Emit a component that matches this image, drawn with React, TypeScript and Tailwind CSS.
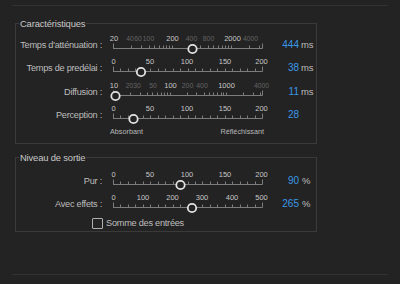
import React from "react";

type Lbl = [string, number, boolean];

const TRACK_START = 113;
const TRACK_END = 262;
const BOX_LEFT = 102;

function linTicks(): number[] {
  const out: number[] = [];
  for (let i = 0; i <= 20; i++) out.push(TRACK_START + ((TRACK_END - TRACK_START) * i) / 20);
  return out;
}

function logTicks(base: number, perDecade: number): number[] {
  const out: number[] = [];
  let dec = base;
  for (let d = 0; d < 4; d++) {
    for (let m = 1; m < 10; m++) {
      const v = dec * m;
      const x = TRACK_START + perDecade * Math.log10(v / base);
      if (x <= TRACK_END - 1) out.push(x);
    }
    dec *= 10;
  }
  out.push(TRACK_END);
  return out;
}

function Slider({ labels, ticks, thumb }: { labels: Lbl[]; ticks: number[]; thumb: number }) {
  const y = 13.5;
  return (
    <div className="relative h-full w-[165px] shrink-0">
      {labels.map(([t, x, b], i) => (
        <span
          key={i}
          className={`absolute top-0 -translate-x-1/2 whitespace-nowrap leading-[8px] ${
            b ? "text-[7.5px] text-[#c8c8c8]" : "text-[6.8px] text-[#646464]"
          }`}
          style={{ left: x - BOX_LEFT }}
        >
          {t}
        </span>
      ))}
      <svg className="absolute left-0 top-0" width="165" height="24" viewBox="0 0 165 24">
        <line x1={TRACK_START - BOX_LEFT} y1={y} x2={TRACK_END - BOX_LEFT + 0.5} y2={y} stroke="#7c7c7c" strokeWidth="1" />
        {ticks.map((x, i) => {
          const px = Math.round(x - BOX_LEFT) + 0.5;
          const end = i === 0 || i === ticks.length - 1;
          return (
            <line key={i} x1={px} y1={end ? y - 5 : y - 3} x2={px} y2={y} stroke="#7c7c7c" strokeWidth="1" />
          );
        })}
        <circle cx={thumb - BOX_LEFT} cy={y + 0.5} r="4.2" fill="#232323" stroke="#e2e2e2" strokeWidth="1.8" />
      </svg>
    </div>
  );
}

function Row({
  label,
  value,
  unit,
  labels,
  ticks,
  thumb,
  unitPad = "pl-[2px]",
}: {
  label: string;
  value: string;
  unit?: string;
  labels: Lbl[];
  ticks: number[];
  thumb: number;
  unitPad?: string;
}) {
  return (
    <div className="flex h-[23.33px] items-start">
      <div className="w-[86px] shrink-0 whitespace-nowrap pt-[4px] text-right text-[9.2px] leading-[12px] tracking-[-0.25px] text-[#bdbdbd]">
        {label}
      </div>
      <Slider labels={labels} ticks={ticks} thumb={thumb} />
      <div className="w-[32px] shrink-0 pt-[4px] text-right text-[10px] leading-[12px] text-[#3a97e6]">
        {value}
      </div>
      {unit && (
        <div className={`${unitPad} pt-[4px] text-[9.5px] leading-[12px] tracking-[-0.2px] text-[#bdbdbd]`}>{unit}</div>
      )}
    </div>
  );
}

const lin200: Lbl[] = [
  ["0", 113.5, true],
  ["50", 150, true],
  ["100", 187, true],
  ["150", 225, true],
  ["200", 261.5, true],
];

export default function App() {
  return (
    <div className="h-[284px] w-[400px] overflow-hidden bg-[#232323] font-['Liberation_Sans',sans-serif]">
      <div className="ml-[12px] mt-[5px] box-border h-[270px] w-[376px] border-b border-t border-[#323232] pt-[11px]">
        <fieldset className="ml-[3px] w-[302px] border border-[#3a3a3a] px-0 pb-[6.67px] pt-[5px]">
          <legend className="ml-[3px] px-[1px] text-[9.4px] leading-[13px] tracking-[-0.15px] text-[#c8c8c8]">Caractéristiques</legend>
          <Row
            label="Temps d'atténuation :"
            value="444"
            unit="ms"
            labels={[
              ["20", 114, true],
              ["40", 130, false],
              ["60", 138, false],
              ["100", 148.5, false],
              ["200", 172.5, true],
              ["400", 191.5, false],
              ["800", 208.5, false],
              ["2000", 232.5, true],
              ["4000", 250.5, false],
            ]}
            ticks={logTicks(20, 59)}
            thumb={192.5}
          />
          <Row label="Temps de predélai :" value="38" unit="ms" labels={lin200} ticks={linTicks()} thumb={141} />
          <Row
            label="Diffusion :"
            value="11"
            unit="ms"
            labels={[
              ["10", 114, true],
              ["20", 129.5, false],
              ["30", 137, false],
              ["50", 153, false],
              ["100", 170.5, true],
              ["200", 187.5, false],
              ["400", 202, false],
              ["1000", 226.5, true],
              ["4000", 261.5, false],
            ]}
            ticks={logTicks(10, 56.5)}
            thumb={115.5}
          />
          <Row label="Perception :" value="28" labels={lin200} ticks={linTicks()} thumb={133.5} />
          <div className="-mt-[1px] ml-[94px] flex h-[9px] w-[154px] justify-between text-[7.25px] leading-[9px] text-[#b8b8b8]">
            <span>Absorbant</span>
            <span>Réfléchissant</span>
          </div>
        </fieldset>

        <fieldset className="ml-[3px] mt-[7.5px] w-[302px] border border-[#3a3a3a] px-0 pb-[2.33px] pt-[6.5px]">
          <legend className="ml-[3px] px-[1px] text-[9.4px] leading-[13px] tracking-[-0.15px] text-[#c8c8c8]">Niveau de sortie</legend>
          <Row label="Pur :" value="90" unit="%" unitPad="pl-[3px]" labels={lin200} ticks={linTicks()} thumb={180.5} />
          <Row
            label="Avec effets :"
            value="265"
            unit="%"
            unitPad="pl-[3px]"
            labels={[
              ["0", 113.5, true],
              ["100", 143, true],
              ["200", 172.5, true],
              ["300", 202, true],
              ["400", 232, true],
              ["500", 261.5, true],
            ]}
            ticks={linTicks()}
            thumb={192}
          />
          <div className="ml-[76px] flex h-[11px] items-center gap-[3px]">
            <div className="box-border h-[11px] w-[11px] rounded-[1px] border-[1.5px] border-[#b0b0b0]" />
            <span className="text-[9.2px] leading-[12px] tracking-[-0.25px] text-[#bdbdbd]">Somme des entrées</span>
          </div>
        </fieldset>
      </div>
    </div>
  );
}
